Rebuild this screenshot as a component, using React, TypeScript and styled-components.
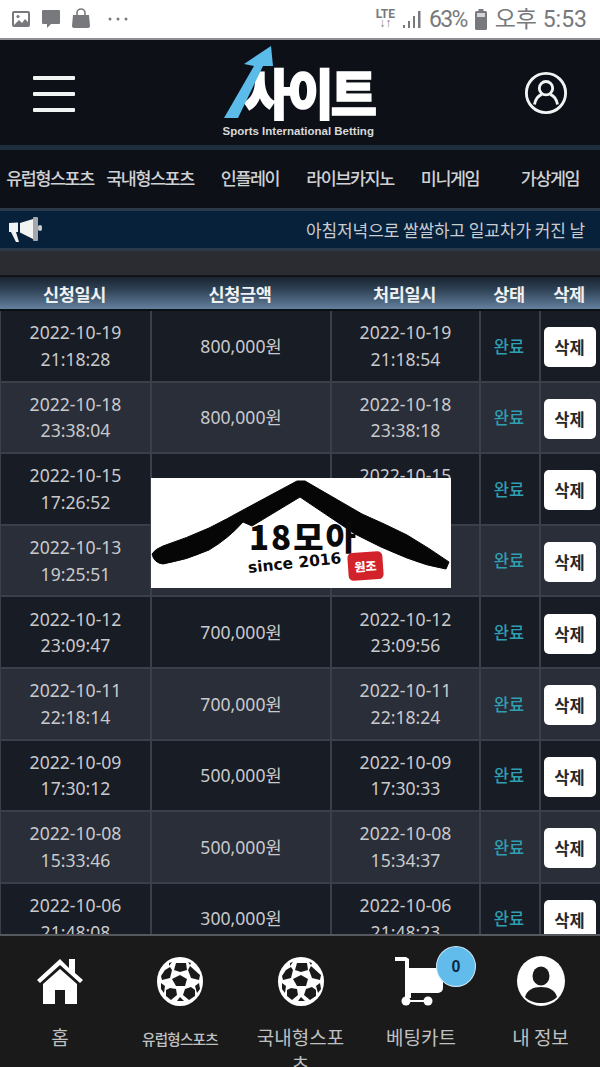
import React from 'react'
import styled, { createGlobalStyle } from 'styled-components'

const Global = createGlobalStyle`
  html, body { margin: 0; padding: 0; background: #16181d; }
  body { font-family: "Noto Sans CJK KR", "Noto Sans", sans-serif; }
  * { box-sizing: border-box; }
`

const Phone = styled.div`
  width: 600px;
  height: 1067px;
  position: relative;
  overflow: hidden;
  display: flex;
  flex-direction: column;
  background: #1b1e25;
`

const StatusBar = styled.div`
  height: 40px;
  flex: none;
  background: #fff;
  border-bottom: 2px solid #8e9094;
  display: flex;
  align-items: center;
  justify-content: space-between;
  padding: 0 13px 0 11px;
  color: #77797c;
`

const StatusGroup = styled.div<{ $gap: number }>`
  display: flex;
  align-items: center;
  gap: ${p => p.$gap}px;
`

const StatusText = styled.span<{ $tight?: boolean }>`
  font-family: "Roboto", "Noto Sans CJK KR", sans-serif;
  font-size: 23px;
  line-height: 1;
  letter-spacing: ${p => (p.$tight ? '-1.7px' : '0')};
  white-space: nowrap;
`

const LteMark = styled.span`
  font-family: "Roboto", sans-serif;
  font-size: 12px;
  font-weight: 700;
  line-height: 9px;
  text-align: center;
  margin-right: 1px;
`

const Header = styled.header`
  height: 105px;
  flex: none;
  background: #0d1017;
  display: flex;
  align-items: center;
  justify-content: space-between;
  padding: 0 32px 0 33px;
  position: relative;
`

const Burger = styled.div`
  width: 42px;
  display: flex;
  flex-direction: column;
  gap: 12px;
  margin-top: 2px;
  span {
    display: block;
    height: 4px;
    border-radius: 1px;
    background: #f2f3f3;
  }
`

const Logo = styled.div`
  width: 156px;
  height: 96px;
  position: relative;
  margin: 0 0 0 6px;
`

const LogoArrow = styled.svg`
  position: absolute;
  left: -2px;
  top: 0;
`

const LogoWord = styled.span`
  position: absolute;
  left: 19px;
  top: 7px;
  width: 138px;
  color: #fff;
  font-size: 54px;
  line-height: 80px;
  font-weight: 900;
  letter-spacing: -3px;
  white-space: nowrap;
  -webkit-text-stroke: 1.5px #fff;
  transform: scaleX(0.93);
  transform-origin: left center;
`

const LogoTag = styled.span`
  position: absolute;
  left: -2px;
  top: 79px;
  color: #d8d9da;
  font-family: "Liberation Sans", sans-serif;
  font-size: 11.5px;
  line-height: 14px;
  font-weight: 700;
  white-space: nowrap;
`

const Nav = styled.nav`
  height: 63px;
  flex: none;
  background: #0d1017;
  border-top: 5px solid #1c2d3d;
  display: grid;
  grid-template-columns: repeat(6, 100px);
  align-items: center;
  padding-bottom: 4px;
`

const NavItem = styled.span`
  color: #cfd1d3;
  font-size: 17.4px;
  font-weight: 500;
  letter-spacing: -1.4px;
  text-align: center;
  white-space: nowrap;
`

const Notice = styled.div`
  height: 43px;
  flex: none;
  background: #08213a;
  border-top: 3px solid #2a3a4a;
  border-bottom: 3px solid #2a3a4a;
  display: flex;
  align-items: center;
  justify-content: space-between;
  padding: 0 15px 0 9px;
  overflow: hidden;
`

const NoticeText = styled.span`
  color: #c9ccd0;
  font-size: 17px;
  white-space: nowrap;
  letter-spacing: -0.1px;
`

const Spacer = styled.div`
  height: 24px;
  flex: none;
  background: #2a2c31;
`

const TableWrap = styled.div`
  flex: 1;
  min-height: 0;
  overflow: hidden;
`

const COLS = '151px 180px 149px 60px 60px'

const HeadRow = styled.div`
  height: 36px;
  display: grid;
  grid-template-columns: ${COLS};
  align-items: center;
  background: linear-gradient(#1a2430, #2f4356 40%, #64809e);
  border-top: 2px solid #111318;
  border-bottom: 2px solid #0c0f14;
  margin-left: -1px;
`

const HeadCell = styled.span`
  color: #f0f1f2;
  font-size: 17.5px;
  font-weight: 700;
  letter-spacing: -0.3px;
  text-align: center;
`

const Row = styled.div<{ $odd: boolean }>`
  height: 71.6px;
  display: grid;
  grid-template-columns: ${COLS};
  background: ${p => (p.$odd ? '#2a2e38' : '#181c24')};
  border-bottom: 2px solid #3a3f49;
  border-left: 1px solid #3a3f49;
`

const Cell = styled.div`
  display: flex;
  align-items: center;
  justify-content: center;
  text-align: center;
  border-right: 2px solid #3a3f49;
  color: #c8cacd;
  font-family: "Noto Sans", "Noto Sans CJK KR", sans-serif;
  font-size: 17.6px;
  line-height: 26.5px;
  &:last-child { border-right: 0; }
`

const Done = styled.span`
  color: #2f9fb3;
  font-family: "Noto Sans CJK KR", sans-serif;
  font-size: 16.5px;
  font-weight: 500;
  margin-right: 2px;
`

const DeleteBtn = styled.button`
  width: 52px;
  height: 40px;
  margin: 3px 3px 0 0;
  border: 0;
  border-radius: 5px;
  background: #fff;
  color: #26272a;
  font-family: "Noto Sans CJK KR", sans-serif;
  font-size: 16.5px;
  font-weight: 700;
  padding: 0;
`

const BottomBar = styled.footer`
  height: 133px;
  flex: none;
  background: #1a1a1a;
  border-top: 2px solid #55585c;
  display: grid;
  grid-template-columns: 120px 120px 121px 120px 119px;
  overflow: hidden;
`

const Tab = styled.div`
  position: relative;
  display: flex;
  flex-direction: column;
  align-items: center;
  padding-top: 20px;
`

const TabIcon = styled.div<{ $shift?: number }>`
  height: 50px;
  display: flex;
  align-items: center;
  justify-content: center;
  margin-right: ${p => p.$shift ?? 0}px;
`

const TabLabel = styled.span<{ $small?: boolean }>`
  width: 100%;
  margin-top: ${p => (p.$small ? '20px' : '17px')};
  color: #bfc0c1;
  font-size: ${p => (p.$small ? '14.6px' : '19px')};
  font-weight: ${p => (p.$small ? 500 : 400)};
  line-height: ${p => (p.$small ? '26px' : '27px')};
  letter-spacing: ${p => (p.$small ? '-0.8px' : '0')};
  text-align: center;
  padding: 0 14px;
  word-break: break-all;
  white-space: ${p => (p.$small ? 'nowrap' : 'normal')};
`

const Badge = styled.span`
  position: absolute;
  left: 75px;
  top: 10px;
  width: 40px;
  height: 41px;
  border-radius: 50%;
  background: #61bcec;
  border: 1px solid #cfe9f7;
  color: #0e2a44;
  font-family: "Liberation Sans", sans-serif;
  font-size: 16px;
  font-weight: 700;
  display: flex;
  align-items: center;
  justify-content: center;
`

const Stamp = styled.div`
  position: absolute;
  left: 151px;
  top: 478px;
  width: 300px;
  height: 110px;
  background: #fff;
  overflow: hidden;
`

const Roof = styled.svg`
  position: absolute;
  left: 0;
  top: 0;
`

const StampTitle = styled.span`
  position: absolute;
  left: 98px;
  top: 35px;
  color: #0a0a0a;
  font-family: "Noto Sans CJK KR", sans-serif;
  font-size: 33px;
  font-weight: 900;
  line-height: 46px;
  letter-spacing: 2px;
  white-space: nowrap;
`

const StampSince = styled.span`
  position: absolute;
  left: 97px;
  top: 80px;
  color: #0a0a0a;
  font-family: "DejaVu Sans", sans-serif;
  font-size: 15.5px;
  font-weight: 700;
  line-height: 20px;
  white-space: nowrap;
  transform: rotate(-6deg);
  transform-origin: left center;
`

const StampSeal = styled.span`
  position: absolute;
  left: 197px;
  top: 74px;
  width: 35px;
  height: 28px;
  border-radius: 5px;
  background: #d2232a;
  color: #fff;
  font-size: 12px;
  font-weight: 900;
  line-height: 28px;
  text-align: center;
  transform: rotate(-4deg);
`

const ROWS = [
  ['2022-10-19', '21:18:28', '800,000원', '21:18:54'],
  ['2022-10-18', '23:38:04', '800,000원', '23:38:18'],
  ['2022-10-15', '17:26:52', '800,000원', '17:27:03'],
  ['2022-10-13', '19:25:51', '700,000원', '19:26:07'],
  ['2022-10-12', '23:09:47', '700,000원', '23:09:56'],
  ['2022-10-11', '22:18:14', '700,000원', '22:18:24'],
  ['2022-10-09', '17:30:12', '500,000원', '17:30:33'],
  ['2022-10-08', '15:33:46', '500,000원', '15:34:37'],
  ['2022-10-06', '21:48:08', '300,000원', '21:48:23'],
]

const NAV = ['유럽형스포츠', '국내형스포츠', '인플레이', '라이브카지노', '미니게임', '가상게임']

// panels of the ball, dark on a white disc
const BALL_CELLS = [
  '23,18 30,22 28,29 19,29 15,22',
  '19,6 29,6 30,13 23,15 17,13',
  '13,10 15,13 13,21 5,23 4,19 8,13',
  '33,9 43,18 42,23 34,21 31,13',
  '13,31 19,32 20,38 14,43 9,39 9,33',
  '28,32 34,30 38,33 38,39 32,43 26,38',
  '23,40 27,44 20,44',
  '4,26 8,29 7,36 4,32',
  '42,26 43,32 40,36 38,29',
  '12,6 15,5 12,9',
  '31,5 34,6 33,8',
]

function SoccerBall() {
  return (
    <svg width="46" height="49" viewBox="0 0 46 49" fill="none">
      <ellipse cx="23" cy="24.500" rx="23" ry="24.500" fill="#fff" />
      {BALL_CELLS.map(points => (
        <polygon key={points} points={points} fill="#1a1a1a" />
      ))}
    </svg>
  )
}

export default function App() {
  return (
    <Phone>
      <Global />
      <StatusBar>
        <StatusGroup $gap={10}>
          <svg width="20" height="20" viewBox="0 0 20 20">
            <rect x="1" y="2" width="18" height="16" rx="2" fill="#77797c" />
            <rect x="3" y="4" width="14" height="12" fill="#fff" />
            <circle cx="7" cy="7.500" r="1.600" fill="#77797c" />
            <path d="M3 16l5-5 3 3 3-4 3 3v3z" fill="#77797c" />
          </svg>
          <svg width="20" height="22" viewBox="0 0 20 22">
            <path d="M2 2h16a1 1 0 0 1 1 1v12a1 1 0 0 1-1 1H10l-4 4v-4H2a1 1 0 0 1-1-1V3a1 1 0 0 1 1-1z" fill="#77797c" />
          </svg>
          <svg width="20" height="22" viewBox="0 0 20 22" fill="none">
            <path d="M2 7h16l1 11a2 2 0 0 1-2 2H3a2 2 0 0 1-2-2z" fill="#77797c" />
            <path d="M6 9V5a4 4 0 0 1 8 0v4" stroke="#77797c" strokeWidth="1.600" />
          </svg>
          <svg width="22" height="4" viewBox="0 0 22 4" style={{ marginLeft: 7 }}>
            <circle cx="2" cy="2" r="1.500" fill="#77797c" />
            <circle cx="10" cy="2" r="1.500" fill="#77797c" />
            <circle cx="18" cy="2" r="1.500" fill="#77797c" />
          </svg>
        </StatusGroup>
        <StatusGroup $gap={7}>
          <LteMark>LTE<br />↓↑</LteMark>
          <svg width="19" height="20" viewBox="0 0 19 20">
            <rect x="0" y="16" width="2" height="3" fill="#77797c" />
            <rect x="5" y="12" width="2" height="7" fill="#77797c" />
            <rect x="10" y="7" width="2" height="12" fill="#77797c" />
            <rect x="15" y="2" width="2.500" height="17" fill="#77797c" />
          </svg>
          <StatusText $tight>63%</StatusText>
          <svg width="14" height="23" viewBox="0 0 14 23">
            <rect x="4.500" y="1" width="5" height="2" fill="#77797c" />
            <rect x="1" y="3" width="12" height="19" rx="1.500" fill="#77797c" />
            <rect x="3" y="5" width="8" height="4" fill="#d4d5d6" />
          </svg>
          <StatusText>오후 5:53</StatusText>
        </StatusGroup>
      </StatusBar>

      <Header>
        <Burger><span /><span /><span /></Burger>
        <Logo>
          <LogoWord>사이트</LogoWord>
          <LogoArrow width="80" height="80" viewBox="0 0 80 80">
            <path d="M1 73L31 21l-10-2L48 1l2 20-10 0L15 73z" fill="#5cbce9" />
          </LogoArrow>
          <LogoTag>Sports International Betting</LogoTag>
        </Logo>
        <svg width="44" height="44" viewBox="0 0 46 46" fill="none" stroke="#f2f3f3" strokeWidth="3">
          <circle cx="23" cy="23" r="20.500" />
          <circle cx="23" cy="18" r="7" />
          <path d="M11 35c1-6 4-9 7.500-10.500M35 35c-1-6-4-9-7.500-10.500" />
        </svg>
      </Header>

      <Nav>
        {NAV.map(n => <NavItem key={n}>{n}</NavItem>)}
      </Nav>

      <Notice>
        <svg width="33" height="26" viewBox="0 0 33 26">
          <path d="M0 6l9-.500V15H7l3 10H7L2 15H0z" fill="#f2f3f3" />
          <path d="M11 6L24 2v20l-13-6.500z" fill="#f2f3f3" />
          <rect x="24" y="0" width="5" height="24" rx="1" fill="#a4a8ae" />
          <rect x="29" y="8" width="4" height="6" rx="2" fill="#c8cacc" />
        </svg>
        <NoticeText>아침저녁으로 쌀쌀하고 일교차가 커진 날</NoticeText>
      </Notice>

      <Spacer />

      <TableWrap>
        <HeadRow>
          <HeadCell>신청일시</HeadCell>
          <HeadCell>신청금액</HeadCell>
          <HeadCell>처리일시</HeadCell>
          <HeadCell>상태</HeadCell>
          <HeadCell>삭제</HeadCell>
        </HeadRow>
        {ROWS.map((r, i) => (
          <Row key={r[0]} $odd={i % 2 === 1}>
            <Cell>{r[0]}<br />{r[1]}</Cell>
            <Cell>{r[2]}</Cell>
            <Cell>{r[0]}<br />{r[3]}</Cell>
            <Cell><Done>완료</Done></Cell>
            <Cell><DeleteBtn>삭제</DeleteBtn></Cell>
          </Row>
        ))}
      </TableWrap>

      <BottomBar>
        <Tab>
          <TabIcon>
            <svg width="46" height="50" viewBox="0 0 46 50">
              <path d="M23 3L0 24l3 3L23 9l20 18 3-3-8-7V3h-6v9z" fill="#fff" />
              <path d="M23 13L6 28v20h12V34h10v14h12V28z" fill="#fff" />
            </svg>
          </TabIcon>
          <TabLabel>홈</TabLabel>
        </Tab>
        <Tab>
          <TabIcon><SoccerBall /></TabIcon>
          <TabLabel $small>유럽형스포츠</TabLabel>
        </Tab>
        <Tab>
          <TabIcon><SoccerBall /></TabIcon>
          <TabLabel>국내형스포츠</TabLabel>
        </Tab>
        <Tab>
          <TabIcon $shift={4}>
            <svg width="48" height="50" viewBox="0 0 48 50">
              <path d="M0 1h11l3 2v33h-4V5H0z" fill="#fff" />
              <path d="M14 12h34v20a5 5 0 0 1-5 5H14z" fill="#fff" />
              <rect x="10" y="36" width="6" height="6" fill="#fff" />
              <circle cx="11" cy="45" r="4.500" fill="#fff" />
              <circle cx="33" cy="45" r="4.500" fill="#fff" />
              <rect x="11" y="44" width="22" height="2" fill="#fff" />
            </svg>
          </TabIcon>
          <Badge>0</Badge>
          <TabLabel>베팅카트</TabLabel>
        </Tab>
        <Tab>
          <TabIcon>
            <svg width="48" height="50" viewBox="0 0 48 50">
              <ellipse cx="24" cy="25" rx="24" ry="25" fill="#fff" />
              <ellipse cx="24" cy="20" rx="8.500" ry="9.500" fill="#1a1a1a" />
              <path d="M8 41c2-7 8-10 16-10s14 3 16 10c-4 4-10 6-16 6s-12-2-16-6z" fill="#1a1a1a" />
            </svg>
          </TabIcon>
          <TabLabel>내 정보</TabLabel>
        </Tab>
      </BottomBar>

      <Stamp>
        <Roof width="300" height="110" viewBox="0 0 300 110">
          <path
            d="M1 76Q4 71 12 68Q36 60 58 50Q76 41 92 32L146 3h8L211 36Q234 46 256 57Q278 70 298 84L295 91Q276 88 256 80Q230 70 204 56L149 19 101 48 92 44Q78 60 58 72Q36 82 12 86Q3 85 1 76z"
            fill="#060606"
            stroke="#060606"
            strokeWidth="1"
            strokeLinejoin="round"
          />
        </Roof>
        <StampTitle>18모아</StampTitle>
        <StampSince>since 2016</StampSince>
        <StampSeal>원조</StampSeal>
      </Stamp>
    </Phone>
  )
}
